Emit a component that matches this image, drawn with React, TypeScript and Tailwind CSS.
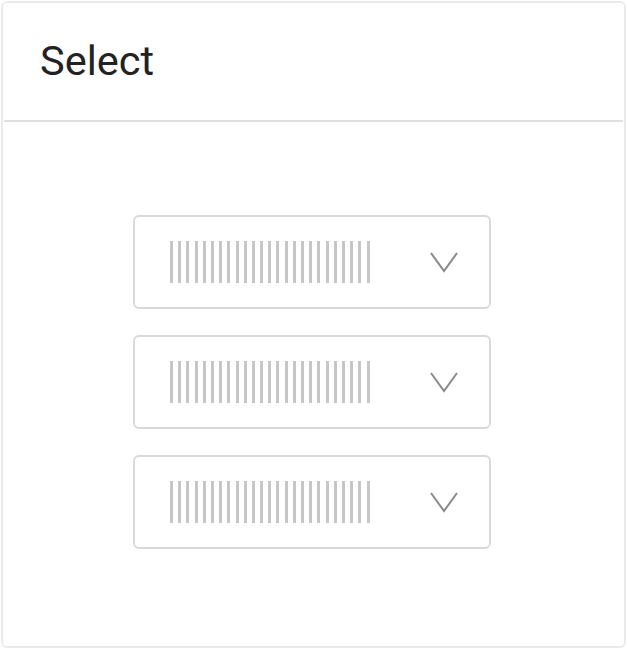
function Bars() {
  return (
    <div className="flex gap-[5.2px] h-[42px]">
      {Array.from({ length: 25 }).map((_, i) => (
        <div key={i} className="w-[3px] h-full bg-[#c6c6c6]" />
      ))}
    </div>
  );
}

function FakeSelect() {
  return (
    <div className="w-[358px] h-[94px] border-2 border-[#d9d9d9] rounded-md flex items-center pl-[35px] pr-[31px] justify-between">
      <Bars />
      <svg width="28" height="22" viewBox="0 0 28 22" fill="none">
        <path d="M1 2 L14 20 L27 2" stroke="#8a8a8a" strokeWidth="2" />
      </svg>
    </div>
  );
}

export default function App() {
  return (
    <div className="w-[627px] h-[649px] bg-white p-px" style={{ fontFamily: "Roboto, sans-serif" }}>
      <div className="w-full h-full border-2 border-[#ebebeb] rounded-md flex flex-col">
        <div className="h-[119px] border-b-2 border-[#e0e0e0] mx-px flex items-center pl-[36px]">
          <h1 className="text-[41.5px] text-[#222222] leading-none pb-[1px]">Select</h1>
        </div>
        <div className="flex-1 flex flex-col items-center pt-[93px] pr-[3px] gap-[26px]">
          <FakeSelect />
          <FakeSelect />
          <FakeSelect />
        </div>
      </div>
    </div>
  );
}
